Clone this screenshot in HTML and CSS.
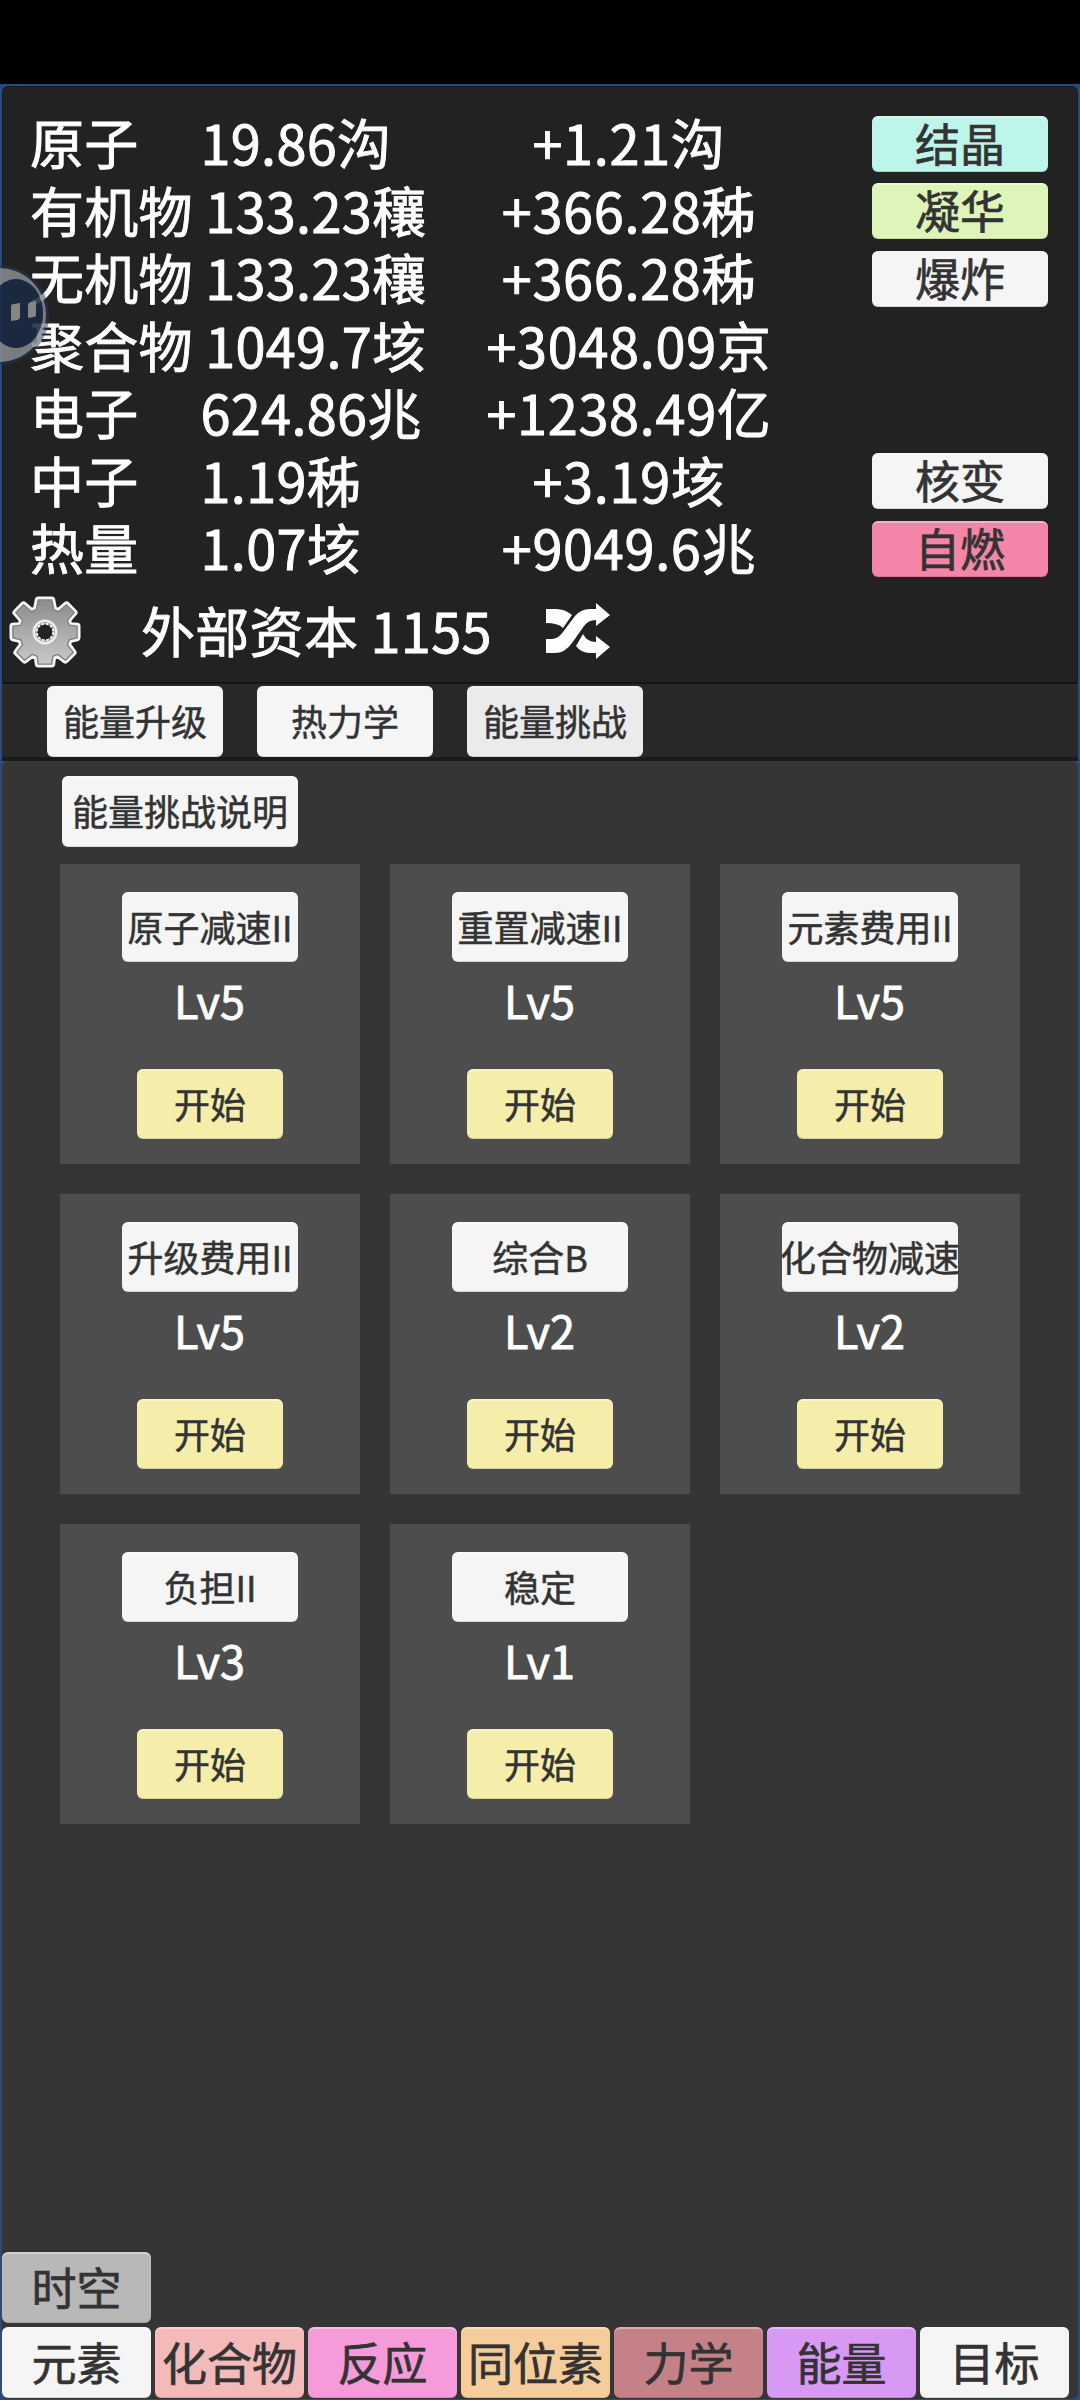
FILE: index.html
```
<!DOCTYPE html>
<html lang="zh-CN">
<head>
    <meta charset="UTF-8">
    <meta name="viewport" content="width=device-width, initial-scale=1.0">
    <title>能量挑战</title>
    <link rel="stylesheet" href="styles.css">
</head>
<body>
    <div class="game">
        <div class="resources">
            <div class="row"><span class="amount">原子     19.86沟</span><span class="rate">+1.21沟</span><button class="btn cyan">结晶</button></div>
            <div class="row"><span class="amount">有机物 133.23穰</span><span class="rate">+366.28秭</span><button class="btn green">凝华</button></div>
            <div class="row"><span class="amount">无机物 133.23穰</span><span class="rate">+366.28秭</span><button class="btn">爆炸</button></div>
            <div class="row"><span class="amount">聚合物 1049.7垓</span><span class="rate">+3048.09京</span></div>
            <div class="row"><span class="amount">电子     624.86兆</span><span class="rate">+1238.49亿</span></div>
            <div class="row"><span class="amount">中子     1.19秭</span><span class="rate">+3.19垓</span><button class="btn">核变</button></div>
            <div class="row"><span class="amount">热量     1.07垓</span><span class="rate">+9049.6兆</span><button class="btn pink">自燃</button></div>
            <div class="capital">
                <svg class="gear" width="72" height="74" viewBox="-37 -38 74 76">
                    <defs>
                        <linearGradient id="metal" x1="0" y1="0" x2="0" y2="1">
                            <stop offset="0" stop-color="#8c8c8c"/>
                            <stop offset="1" stop-color="#c9c9c9"/>
                        </linearGradient>
                        <path id="cog" d="M-7 -33 H7 L9 -23 L14 -21 L22 -28 L30 -20 L23 -12 L25 -7 L33 -6 V6 L25 8 L23 13 L29 21 L21 29 L13 23 L8 25 L7 33 H-7 L-8 25 L-13 23 L-21 29 L-29 21 L-23 13 L-25 8 L-33 6 V-6 L-25 -7 L-23 -12 L-30 -20 L-22 -28 L-14 -21 L-9 -23 Z"/>
                    </defs>
                    <use href="#cog" fill="#eee" stroke="#f4f4f4" stroke-width="7" stroke-linejoin="round"/>
                    <use href="#cog" fill="url(#metal)" stroke="#808080" stroke-width="1.4" stroke-linejoin="round"/>
                    <circle r="11.5" fill="#999" stroke="#eee" stroke-width="2.5"/>
                    <circle r="8.5" fill="#222" stroke="#f4f4f4" stroke-width="2" stroke-dasharray="3 1.5"/>
                </svg>
                <span class="capital-text">外部资本 1155</span>
                <svg class="shuffle" width="64" height="56" viewBox="0 0 64 56">
                    <g fill="#fff">
                        <path d="M0 6 H10 Q19 6 26 12 L17 25 Q12 20 0 20 Z"/>
                        <path d="M0 36 H6 Q12 36 17 29 L29 13 Q35 6 44 6 H50 V0 L64 12 L50 23 V17 Q42 17 38 23 L26 40 Q19 50 9 50 H0 Z"/>
                        <path d="M37 31 Q41 39 50 39 V33 L64 44 L50 56 V50 H44 Q35 50 30 43 Z"/>
                    </g>
                </svg>
            </div>
        </div>
        <div class="tabs">
            <button class="btn">能量升级</button>
            <button class="btn">热力学</button>
            <button class="btn active">能量挑战</button>
        </div>
        <div class="content">
            <button class="btn help">能量挑战说明</button>
            <div class="challenges">
                <div class="card"><button class="btn name">原子减速II</button><p>Lv5</p><button class="btn start">开始</button></div>
                <div class="card"><button class="btn name">重置减速II</button><p>Lv5</p><button class="btn start">开始</button></div>
                <div class="card"><button class="btn name">元素费用II</button><p>Lv5</p><button class="btn start">开始</button></div>
                <div class="card"><button class="btn name">升级费用II</button><p>Lv5</p><button class="btn start">开始</button></div>
                <div class="card"><button class="btn name">综合B</button><p>Lv2</p><button class="btn start">开始</button></div>
                <div class="card"><button class="btn name long">化合物减速</button><p>Lv2</p><button class="btn start">开始</button></div>
                <div class="card"><button class="btn name">负担II</button><p>Lv3</p><button class="btn start">开始</button></div>
                <div class="card"><button class="btn name">稳定</button><p>Lv1</p><button class="btn start">开始</button></div>
            </div>
            <div class="nav">
                <button class="btn gray">时空</button>
                <div class="nav-row">
                    <button class="btn">元素</button>
                    <button class="btn salmon">化合物</button>
                    <button class="btn magenta">反应</button>
                    <button class="btn orange">同位素</button>
                    <button class="btn rose">力学</button>
                    <button class="btn purple">能量</button>
                    <button class="btn">目标</button>
                </div>
            </div>
        </div>
    </div>

    <!-- floating helper, half hidden behind the screen edge -->
    <svg class="floater" width="52" height="104" viewBox="0 0 52 104">
        <circle cx="-1" cy="52" r="50" fill="#20355c" fill-opacity="0.5"/>
        <path fill="#a09f9b" fill-opacity="0.7" fill-rule="evenodd" d="M-1 5 A47 47 0 0 1 -1 99 Z M16 16 A27 34.5 0 0 0 16 85 A27 34.5 0 0 0 16 16 Z"/>
        <ellipse cx="16" cy="50.5" rx="27" ry="34.5" fill="#1a2842" fill-opacity="0.75"/>
        <path d="M11 43 Q11 41 14 41 L20 40 V55 L18 57 L11 58 Z M28 41 L30 39 L36 38 V53 L34 54 L28 55 Z" fill="#858583"/>
    </svg>
</body>
</html>
```
FILE: styles.css
```
* {
    box-sizing: border-box;
}
body {
    margin: 0;
    padding-top: 84px;
    height: 2400px;
    background-color: #000;
    font-family: "Noto Sans CJK SC", sans-serif;
    color: #fff;
    overflow: hidden;
    -webkit-text-stroke: 0.9px currentColor;
}
.game {
    display: flex;
    flex-direction: column;
    height: 2316px;
    padding: 2px 2px 1px;
    background-color: #2c4a7c;
}
.resources {
    height: 598px;
    padding: 23px 29px 0 27px;
    background-color: #222;
    border: 1px solid #141a24;
    border-bottom: 2px solid #151515;
    border-radius: 6px 6px 0 0;
    font-size: 54px;
}
.row {
    display: grid;
    grid-template-columns: 429px 340px 1fr;
    align-items: center;
    height: 67.5px;
    line-height: 63px;
    white-space: pre;
}
.amount,
.rate {
    padding-bottom: 4px;
}
.amount {
    letter-spacing: 0.3px;
}
.rate {
    text-align: center;
    letter-spacing: 0.7px;
}
.btn {
    width: 176px;
    height: 71px;
    padding: 0 0 3px;
    border: none;
    border-radius: 6px;
    background-color: #f5f5f5;
    box-shadow: inset 0 2px 0 rgba(255, 255, 255, 0.35), inset 0 -1px 0 rgba(0, 0, 0, 0.12);
    color: #333;
    font-family: inherit;
    font-size: 36px;
    line-height: 1;
    white-space: nowrap;
    -webkit-text-stroke: 0.5px currentColor;
}
.row .btn {
    justify-self: end;
    height: 56px;
    font-size: 45px;
}
.capital {
    display: flex;
    align-items: center;
    height: 94px;
    margin-left: -21px;
}
.gear {
    margin-top: 4px;
}
.capital-text {
    width: 405px;
    margin-left: 60px;
    letter-spacing: 0.3px;
}
.shuffle {
    margin-top: 2px;
}
.tabs {
    display: flex;
    gap: 34px;
    height: 77px;
    padding: 2px 45px 0;
    background-color: #282828;
    border-bottom: 4px solid #1a1a1a;
}
.content {
    display: flex;
    flex-direction: column;
    flex: 1;
    padding-top: 15px;
    background-color: #353535;
    border-radius: 6px;
}
.help {
    width: 236px;
    margin-left: 60px;
}
.challenges {
    display: grid;
    grid-template-columns: repeat(3, 300px);
    grid-auto-rows: 300px;
    gap: 30px;
    margin: 17px 0 0 58px;
}
.card {
    display: flex;
    flex-direction: column;
    align-items: center;
    padding-top: 28px;
    background-color: #4d4d4d;
}
.card p {
    height: 107px;
    margin: 0;
    padding-right: 1px;
    font-size: 45px;
    line-height: 76px;
}
.card .btn {
    height: 70px;
}
.card .long {
    text-indent: -2px;
}
.card .start {
    width: 146px;
    background-color: #f5eeab;
}
.nav {
    display: flex;
    flex-direction: column;
    gap: 4px;
    margin-top: auto;
    padding-bottom: 1px;
}
.nav-row {
    display: flex;
    gap: 4px;
}
.nav .btn {
    width: 149px;
    font-size: 45px;
}
.row .btn,
.nav .btn {
    -webkit-text-stroke-width: 0.7px;
}
.btn.active { background-color: #ebebeb; }
.btn.cyan { background-color: #bdf5ea; }
.btn.green { background-color: #ddf5b8; }
.btn.pink { background-color: #f585a8; }
.btn.gray { background-color: #b8b8b8; }
.btn.salmon { background-color: #f4b9b9; }
.btn.magenta { background-color: #f59bd9; }
.btn.orange { background-color: #f5cd9b; }
.btn.rose { background-color: #c48188; }
.btn.purple { background-color: #d899f5; }
.floater {
    position: absolute;
    left: 0;
    top: 263px;
}
```
